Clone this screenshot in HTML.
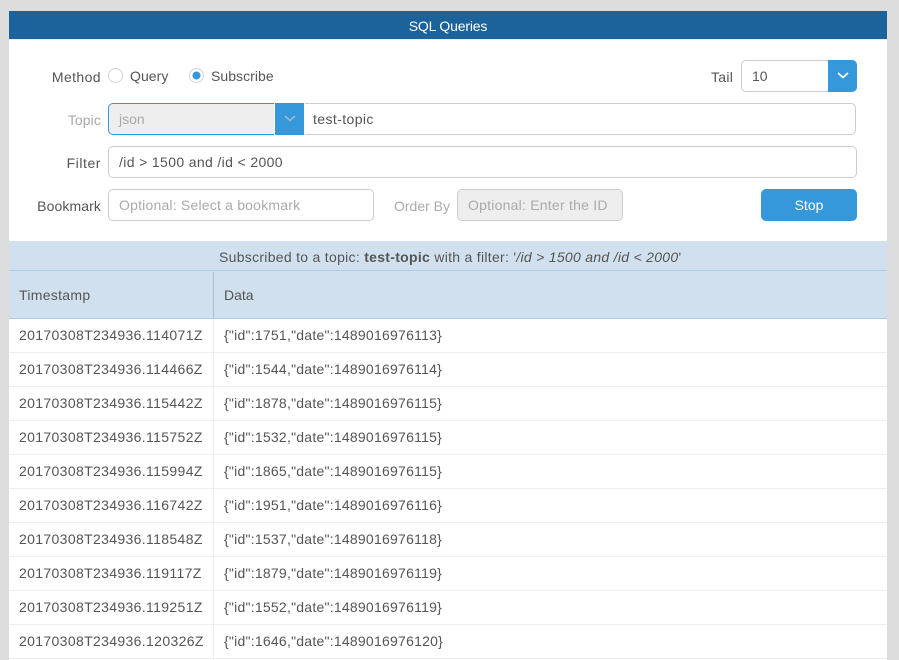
<!DOCTYPE html>
<html>
<head>
<meta charset="utf-8">
<style>
html,body{margin:0;padding:0;width:899px;height:660px;overflow:hidden;background:#dcdcdc}
body{font-family:"Liberation Sans",sans-serif;font-size:14px;color:#555;position:relative}
#p{position:absolute;left:9px;top:11px;width:878px;height:649px;background:#fff}
.a{position:absolute;white-space:nowrap}
.t{line-height:20px;height:20px}
.lab{text-align:right;width:100px;left:1px;letter-spacing:.1px}
.box{position:absolute;box-sizing:border-box;border:1px solid #ccc;background:#fff;height:32px;border-radius:5px;line-height:30px;padding-left:10px;white-space:nowrap}
.dis{background:#eee;color:#aaa}
.ph{color:#aaa}
.btn{position:absolute;background:#3498db}
.row{position:absolute;left:9px;width:878px;height:34px;box-sizing:border-box;border-bottom:1px solid #eee;line-height:33px}
.row span{position:absolute;white-space:nowrap}
.row .c1{left:10px;letter-spacing:.35px}
.row .c2{left:215px;letter-spacing:.24px}
.div{position:absolute;left:213px;width:1px;background:#eee}
</style>
</head>
<body>
<div id="p"></div>
<div class="a" style="left:9px;top:11px;width:878px;height:28px;background:#1c629b;border-bottom:1px solid #e8eef3;color:#fff;text-align:center;line-height:31px;letter-spacing:-.17px">SQL Queries</div>

<div class="a t lab" style="top:67px;letter-spacing:.4px">Method</div>
<svg class="a" style="left:108px;top:68px" width="16" height="16"><circle cx="7.5" cy="7.5" r="7" fill="#fff" stroke="#d4d4d4"/></svg>
<div class="a t" style="left:130px;top:66px;letter-spacing:.05px">Query</div>
<svg class="a" style="left:189px;top:68px" width="16" height="16"><circle cx="7.5" cy="7.5" r="7" fill="#fff" stroke="#d4d4d4"/><circle cx="7.5" cy="7.5" r="4" fill="#3498db"/></svg>
<div class="a t" style="left:211px;top:66px;letter-spacing:.05px">Subscribe</div>

<div class="a t" style="left:711px;top:67px;letter-spacing:.3px">Tail</div>
<div class="box" style="left:741px;top:60px;width:116px">10</div>
<div class="btn" style="left:828px;top:60px;width:29px;height:32px;border-radius:0 5px 5px 0"></div>
<svg class="a" style="left:836px;top:70px" width="14" height="12"><path d="M2 3L7 7.5L12 3" fill="none" stroke="#fff" stroke-width="1.7"/></svg>

<div class="a t lab" style="top:110px;color:#aaa">Topic</div>
<div class="box dis" style="left:108px;top:103px;width:166px;border-color:#3498db;border-right:0;border-radius:5px 0 0 5px">json</div>
<div class="btn" style="left:275px;top:103px;width:29px;height:32px"></div>
<svg class="a" style="left:283px;top:113px" width="14" height="12"><path d="M2 3L7 7.5L12 3" fill="none" stroke="#9db8cc" stroke-width="1.7"/></svg>
<div class="box" style="left:305px;top:103px;width:551px;border-left:0;border-radius:0 5px 5px 0;padding-left:8px;color:#555;letter-spacing:.4px">test-topic</div>

<div class="a t lab" style="top:153px;letter-spacing:.55px">Filter</div>
<div class="box" style="left:108px;top:146px;width:749px;letter-spacing:.36px">/id &gt; 1500 and /id &lt; 2000</div>

<div class="a t lab" style="top:196px">Bookmark</div>
<div class="box ph" style="left:108px;top:189px;width:266px;letter-spacing:.2px">Optional: Select a bookmark</div>
<div class="a t" style="left:394px;top:196px;color:#aaa">Order By</div>
<div class="box dis" style="left:457px;top:189px;width:166px;letter-spacing:.23px">Optional: Enter the ID</div>
<div class="btn" style="left:761px;top:189px;width:96px;height:32px;border-radius:5px;color:#fff;text-align:center;line-height:33px">Stop</div>

<div class="a" style="left:9px;top:241px;width:878px;height:29px;background:#d1e0ee;line-height:32px;color:#555;letter-spacing:.29px;text-indent:210px">Subscribed to a topic: <b>test-topic</b> with a filter: '<i>/id &gt; 1500 and /id &lt; 2000</i>'</div>
<div class="a" style="left:9px;top:270px;width:878px;height:1px;background:#a9cde6"></div>
<div class="a" style="left:9px;top:271px;width:878px;height:47px;background:#d1e0ee"></div>
<div class="a" style="left:9px;top:318px;width:878px;height:1px;background:#a9cde6"></div>
<div class="a" style="left:213px;top:272px;width:1px;height:46px;background:#b0bcc8"></div>
<div class="a t" style="left:19px;top:285px;letter-spacing:.3px">Timestamp</div>
<div class="a t" style="left:224px;top:285px">Data</div>

<div class="row" style="top:319px"><span class="c1">20170308T234936.114071Z</span><span class="c2">{"id":1751,"date":1489016976113}</span></div>
<div class="row" style="top:353px"><span class="c1">20170308T234936.114466Z</span><span class="c2">{"id":1544,"date":1489016976114}</span></div>
<div class="row" style="top:387px"><span class="c1">20170308T234936.115442Z</span><span class="c2">{"id":1878,"date":1489016976115}</span></div>
<div class="row" style="top:421px"><span class="c1">20170308T234936.115752Z</span><span class="c2">{"id":1532,"date":1489016976115}</span></div>
<div class="row" style="top:455px"><span class="c1">20170308T234936.115994Z</span><span class="c2">{"id":1865,"date":1489016976115}</span></div>
<div class="row" style="top:489px"><span class="c1">20170308T234936.116742Z</span><span class="c2">{"id":1951,"date":1489016976116}</span></div>
<div class="row" style="top:523px"><span class="c1">20170308T234936.118548Z</span><span class="c2">{"id":1537,"date":1489016976118}</span></div>
<div class="row" style="top:557px"><span class="c1">20170308T234936.119117Z</span><span class="c2">{"id":1879,"date":1489016976119}</span></div>
<div class="row" style="top:591px"><span class="c1">20170308T234936.119251Z</span><span class="c2">{"id":1552,"date":1489016976119}</span></div>
<div class="row" style="top:625px"><span class="c1">20170308T234936.120326Z</span><span class="c2">{"id":1646,"date":1489016976120}</span></div>
<div class="div" style="top:319px;height:341px"></div>
</body>
</html>
